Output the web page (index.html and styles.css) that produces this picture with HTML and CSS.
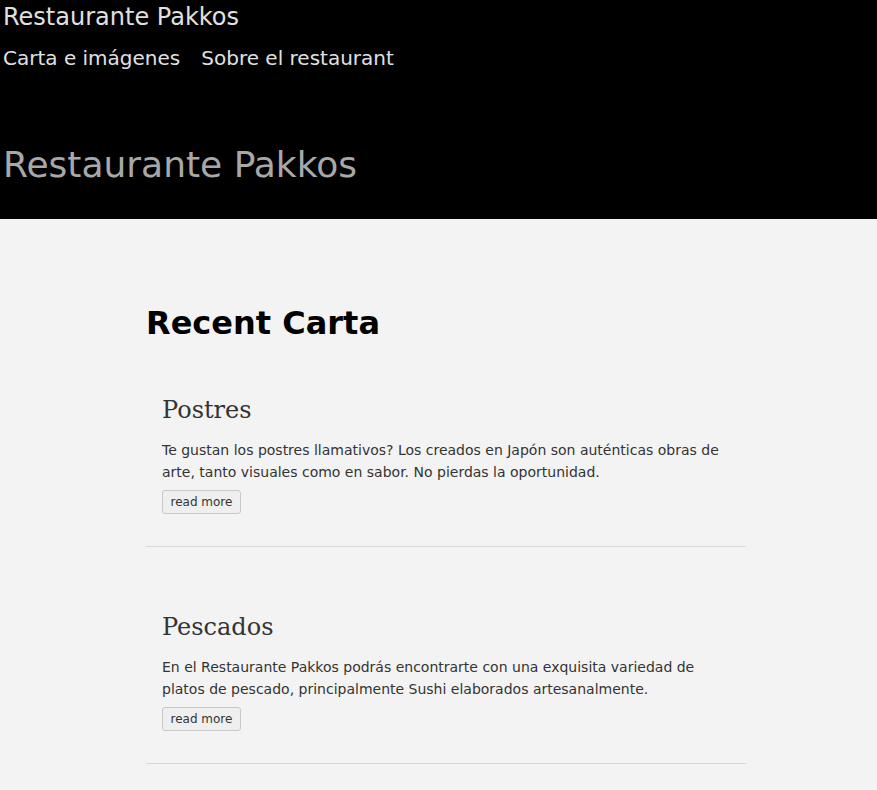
FILE: index.html
```html
<!DOCTYPE html>
<html lang="es">
<head>
<meta charset="utf-8">
<title>Restaurante Pakkos</title>
<link rel="stylesheet" href="styles.css">
</head>
<body>
<header class="site-header">
  <div class="brand">Restaurante Pakkos</div>
  <nav class="nav">
    <a href="#">Carta e imágenes</a>
    <a href="#">Sobre el restaurant</a>
  </nav>
  <h1 class="hero-title">Restaurante Pakkos</h1>
</header>
<main class="content">
  <h2 class="section-title">Recent Carta</h2>
  <article class="post">
    <h3 class="post-title">Postres</h3>
    <p class="post-text">Te gustan los postres llamativos? Los creados en Japón son auténticas obras de arte, tanto visuales como en sabor. No pierdas la oportunidad.</p>
    <button class="btn">read more</button>
  </article>
  <article class="post">
    <h3 class="post-title">Pescados</h3>
    <p class="post-text">En el Restaurante Pakkos podrás encontrarte con una exquisita variedad de platos de pescado, principalmente Sushi elaborados artesanalmente.</p>
    <button class="btn">read more</button>
  </article>
</main>
</body>
</html>
```
FILE: styles.css
```css
html, body {
  margin: 0;
  padding: 0;
}
body {
  background: #f3f3f3;
  font-family: "DejaVu Sans", sans-serif;
  color: #333;
}
.site-header {
  background: #000;
  padding: 0 3px;
  height: 219px;
  box-sizing: border-box;
}
.brand {
  color: #e0e0e0;
  font-size: 24px;
  line-height: 34px;
}
.nav {
  display: flex;
  gap: 21px;
  margin-top: 8px;
}
.nav a {
  color: #e0e0e0;
  text-decoration: none;
  font-size: 20px;
  line-height: 32px;
}
.hero-title {
  margin: 67px 0 0;
  font-weight: normal;
  font-size: 36px;
  line-height: 48px;
  color: #a8a8a8;
}
.content {
  width: 600px;
  margin-left: 146px;
  padding-top: 80px;
}
.section-title {
  margin: 0;
  font-size: 32px;
  line-height: 48px;
  color: #000;
}
.post {
  padding: 47px 16px 32px;
  border-bottom: 1px solid #d8d8d8;
}
.post + .post {
  padding-top: 64px;
}
.post-title {
  margin: 0 0 13px;
  font-family: "DejaVu Serif", serif;
  font-weight: normal;
  font-size: 24px;
  line-height: 32px;
  color: #333;
}
.post-text {
  margin: 0 0 7px;
  font-size: 14px;
  line-height: 22px;
}
.btn {
  font-family: "DejaVu Sans", sans-serif;
  font-size: 12px;
  color: #333;
  background: #efefef;
  border: 1px solid #c8c8c8;
  border-radius: 3px;
  padding: 3px 7.5px;
  height: 24px;
}
```
